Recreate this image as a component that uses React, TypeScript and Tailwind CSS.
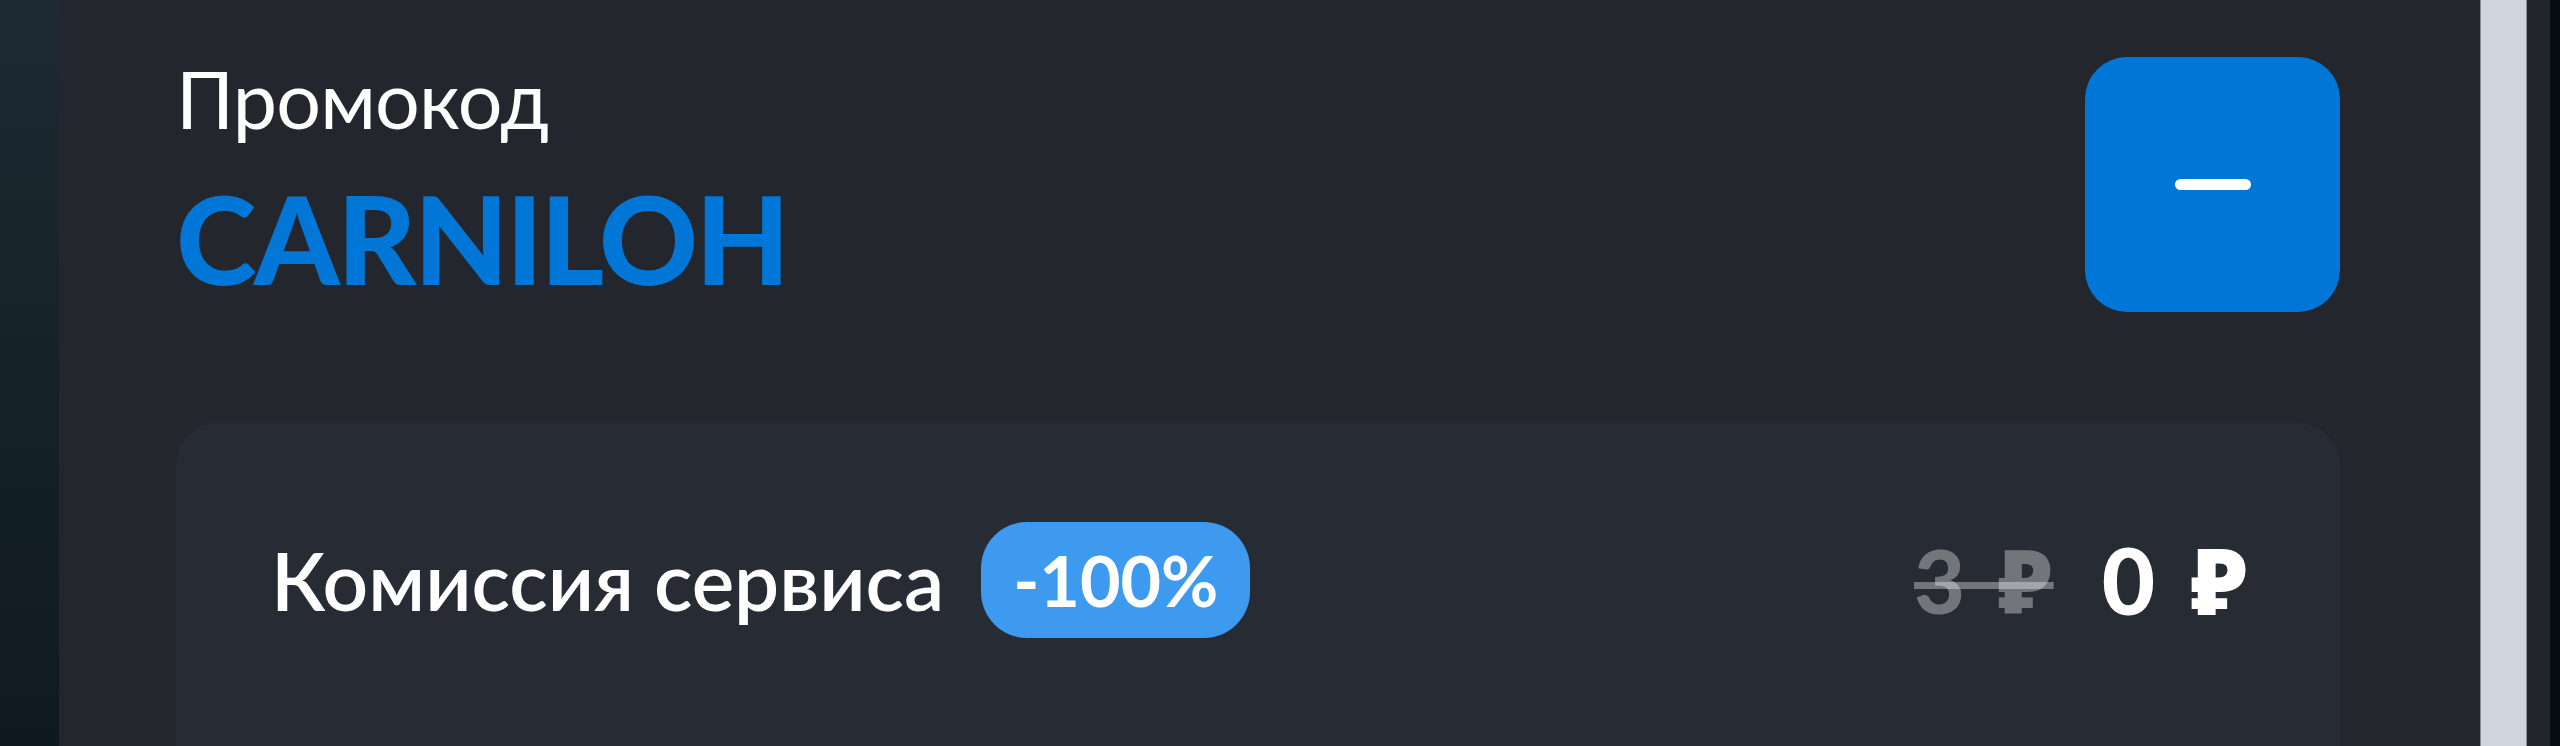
import React from 'react';

const font = { fontFamily: 'Lato, "Noto Sans", sans-serif' };

const App: React.FC = () => {
  return (
    <div className="flex h-[746px] w-full overflow-hidden bg-[#23262d]" style={font}>
      {/* left backdrop */}
      <div className="w-[59px] shrink-0 bg-gradient-to-b from-[#1d2a33] to-[#0f1a20]" />

      {/* panel */}
      <div className="flex-1 bg-[#23262d] pl-[117px] pr-[140px] pt-[57px]">
        <div className="flex items-start justify-between">
          <div className="pt-[2px]">
            <div className="text-[79px] leading-none font-normal text-white tracking-[-0.01em]">Промокод</div>
            <div className="mt-[39px] text-[122px] leading-none font-black text-[#0077d6] tracking-[-0.02em]">
              CARNILOH
            </div>
          </div>
          <button className="flex h-[255px] w-[255px] items-center justify-center rounded-[42px] bg-[#0077d6]">
            <span className="block h-[11px] w-[76px] rounded-full bg-white" />
          </button>
        </div>

        <div className="mt-[111px] rounded-[42px] bg-[#272b33] pl-[95px] pr-[91px] pt-[99px] pb-[240px]">
          <div className="flex items-center justify-between">
            <div className="flex items-center gap-[37px]">
              <span className="text-[80px] leading-none font-semibold text-white">Комиссия сервиса</span>
              <span className="flex h-[116px] items-center rounded-[46px] bg-[#3d9aee] px-[32px] text-[70px] leading-none font-bold text-white">
                -100%
              </span>
            </div>
            <div className="flex items-center gap-[48px]">
              <span className="text-[88px] leading-none font-black text-white/35 line-through decoration-[7px] [word-spacing:12px]">
                3 ₽
              </span>
              <span className="text-[92px] leading-none font-black text-white [word-spacing:14px]">0 ₽</span>
            </div>
          </div>
        </div>
      </div>

      {/* scrollbar-like strip */}
      <div className="w-[47px] shrink-0 border-x border-[#8a8e95] bg-[#d0d4dc]" />
      <div className="w-[23px] shrink-0 bg-[#22252b]" />
      <div className="w-[10px] shrink-0 bg-[#070c12]" />
    </div>
  );
};

export default App;
